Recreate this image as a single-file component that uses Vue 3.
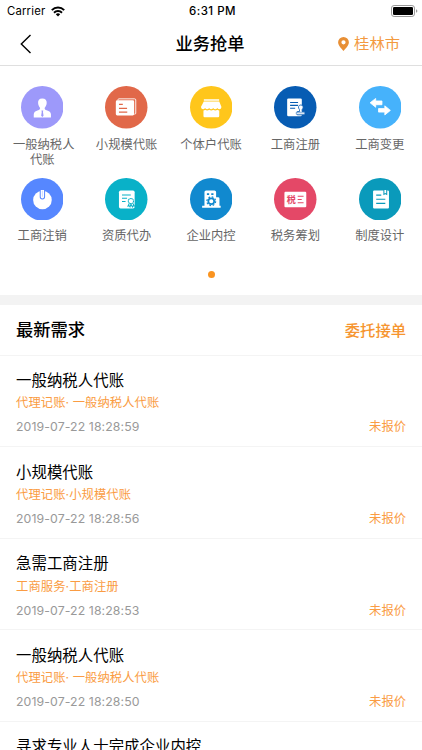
<script setup>
const services = [
  { icon: 'person', label: '一般纳税人代账', color: '#9d99fa' },
  { icon: 'ledger', label: '小规模代账', color: '#e16849' },
  { icon: 'shop', label: '个体户代账', color: '#ffc61b' },
  { icon: 'register', label: '工商注册', color: '#075cb3' },
  { icon: 'change', label: '工商变更', color: '#46b2fb' },
  { icon: 'power', label: '工商注销', color: '#5687ff' },
  { icon: 'certificate', label: '资质代办', color: '#09b1c8' },
  { icon: 'building', label: '企业内控', color: '#1189cf' },
  { icon: 'tax', label: '税务筹划', color: '#e44867' },
  { icon: 'book', label: '制度设计', color: '#0a9abb' },
]

const requests = [
  { title: '一般纳税人代账', category: '代理记账· 一般纳税人代账', time: '2019-07-22 18:28:59' },
  { title: '小规模代账', category: '代理记账·小规模代账', time: '2019-07-22 18:28:56' },
  { title: '急需工商注册', category: '工商服务·工商注册', time: '2019-07-22 18:28:53' },
  { title: '一般纳税人代账', category: '代理记账· 一般纳税人代账', time: '2019-07-22 18:28:50' },
  { title: '寻求专业人士完成企业内控', category: '', time: '' },
]
</script>

<template>
  <div class="screen">
    <div class="status">
      <div class="carrier">
        <span>Carrier</span>
        <svg class="wifi" viewBox="0 0 14 11" width="14" height="11">
          <g fill="none" stroke="#000" stroke-width="2">
            <path d="M.8 4.1a8.9 8.9 0 0 1 12.4 0" />
            <path d="M3 6.7a5.8 5.8 0 0 1 8 0" />
          </g>
          <path d="M4.8 8.2a3.2 3.2 0 0 1 4.4 0L7 10.5z" />
        </svg>
      </div>
      <div class="clock">6:31 PM</div>
      <svg class="battery" viewBox="0 0 27 12" width="27" height="12">
        <rect x=".5" y=".5" width="23" height="11" rx="2.6" fill="#fff" stroke="#999" />
        <rect x="2" y="2" width="20" height="8" rx="1.3" />
        <path d="M25 4.2q1.4.5 1.4 1.8T25 7.8z" fill="#999" />
      </svg>
    </div>

    <header class="nav">
      <svg class="back" viewBox="0 0 12 20" width="12" height="20">
        <path d="M10.5 1 1.3 10l9.2 9" fill="none" stroke="#000" stroke-width="1.4" />
      </svg>
      <h1>业务抢单</h1>
      <div class="city">
        <svg viewBox="0 0 11 14" width="11" height="14">
          <path fill="#e88f35" fill-rule="evenodd" d="M5.5 0A5.4 5.4 0 0 0 .1 5.3C.1 8.8 4 12.3 5.5 14 7 12.3 10.9 8.8 10.9 5.3A5.4 5.4 0 0 0 5.5 0zm0 3.2a2.1 2.1 0 1 1 0 4.2 2.1 2.1 0 0 1 0-4.2z" />
        </svg>
        <span>桂林市</span>
      </div>
    </header>

    <section class="services">
      <div v-for="s in services" :key="s.label" class="service">
        <svg class="icon" viewBox="0 0 42 42" width="42" height="42">
          <circle cx="21" cy="21" r="21" :fill="s.color" />
          <g v-if="s.icon === 'person'" fill="#fff">
            <path d="M21 12.3c-3 0-4.3 2-4.1 4.4.1 2.1 1 3.8 2 5-.1 1.3-.7 1.8-2 2.3-2.7.9-4.3 1.8-4.3 4.2v2.9h17v-2.9c0-2.4-1.6-3.3-4.3-4.2-1.3-.5-1.9-1-2-2.3 1-1.2 2-2.9 2.1-5 .2-2.4-1.3-4.4-4.4-4.4z" />
            <path d="M20.2 24.3h1.8l-.3 1.4.6 3.6-1.2 1.3-1.2-1.3.6-3.6z" :fill="s.color" />
          </g>
          <g v-else-if="s.icon === 'ledger'">
            <path d="M12.8 14.2v-.6q0-.9 1-.9h15.5q1.1 0 1.1 1.1v13q0 1-1 1h-.5" fill="none" stroke="#fff" stroke-width=".9" />
            <rect x="10.7" y="14.1" width="18.1" height="15" rx="1.4" fill="#fff" />
            <path d="M13.8 18.2h3.8M13.8 22.1h8M13.8 25.9h8.2" :stroke="s.color" stroke-width="1.2" />
          </g>
          <g v-else-if="s.icon === 'shop'" fill="#fff">
            <path d="M13.7 13h15.1v1.5H13.7zM13.6 15.4h15.3l2.2 5.4q-.3 2.2-2.1 2.2-1.2 0-2-1.3-.8 1.3-2.1 1.3-1.2 0-2-1.3-.8 1.3-2 1.3t-2-1.3q-.8 1.3-2 1.3t-2-1.3q-.8 1.3-2 1.3-1.7 0-2.1-2.2z" />
            <path d="M13.3 24.2q1 0 1.7-.7 2 1.4 4-.1 2 1.5 4 0 2 1.5 4 .1.8.7 1.9.7v5.4q0 1.2-1.1 1.2H14.4q-1.1 0-1.1-1.2z" />
          </g>
          <g v-else-if="s.icon === 'register'">
            <rect x="13" y="12.3" width="14.5" height="17.6" rx="1.3" fill="#fff" />
            <path d="M15.9 16.3h7.9M15.9 19.2h7.9M15.9 22h5" :stroke="s.color" stroke-width="1.1" />
            <path d="M26.6 18.7a2.4 2.4 0 0 1 1.3 4.3l-.2 2.2h2.2v3.3H23v-3.3h2.3l-.2-2.2a2.4 2.4 0 0 1 1.5-4.3z" fill="#fff" :stroke="s.color" stroke-width=".8" />
            <path d="M22 26h8.4v1.9H22z" fill="#fff" :stroke="s.color" stroke-width=".5" />
          </g>
          <g v-else-if="s.icon === 'change'" fill="#fff" stroke="#fff" stroke-width=".8" stroke-linejoin="round">
            <path d="m11 16.6 5.5-4.3v2.5h6.2v3.7h-6.2V21z" />
            <path d="m31 24.1-5.5-4.5v2.7h-6.2v3.5h6.2v2.8z" />
          </g>
          <g v-else-if="s.icon === 'power'">
            <circle cx="21.2" cy="21.7" r="9.2" fill="#fff" />
            <path d="M19 11.8v6.7a2.15 2.15 0 0 0 4.3 0v-6.7" fill="#fff" :stroke="s.color" stroke-width="1" />
            <path d="M21.15 12.5v6" :stroke="s.color" stroke-width=".3" />
          </g>
          <g v-else-if="s.icon === 'certificate'">
            <rect x="13.8" y="12.4" width="15.5" height="17.7" rx="1.6" fill="#fff" />
            <g fill="none" :stroke="s.color" stroke-width="1">
              <path d="M16.8 16.9h8.7M16.8 20.1h5M16.8 23.3h3.5" />
              <circle cx="25.6" cy="22.8" r="2.6" stroke-dasharray="1.5 .25" />
              <path d="m24 25.2-1.3 2.5 1.3-.2.7 1.1 1-2.6 1.4 2.6.7-1.1 1.3.2-1.5-2.5" />
            </g>
          </g>
          <g v-else-if="s.icon === 'building'">
            <path d="M14.3 13.9q0-1.6 1.6-1.6h8.2q1.7 0 1.7 1.6v5h2q1.3 0 1.3 1.3v7.3h1.2v2H12v-2h2.3z" fill="#fff" />
            <path d="M16.7 15.9h2.2M21 15.9h2.2" :stroke="s.color" stroke-width="1.7" />
            <circle cx="21" cy="23" r="4.3" :stroke="s.color" stroke-width="1.2" stroke-dasharray="1.7 1.677" fill="none" />
            <circle cx="21" cy="23" r="2.9" :stroke="s.color" stroke-width="1.7" fill="#fff" />
          </g>
          <g v-else-if="s.icon === 'tax'">
            <rect x="10.3" y="13.7" width="21.6" height="15.1" rx="1" fill="#fff" />
            <text x="12.5" y="24.6" class="tax-mark" :fill="s.color">税</text>
            <path d="M23.4 18h5.8M23.4 21.2h4M23.4 24.4h5.8" :stroke="s.color" stroke-width="1.1" />
          </g>
          <g v-else>
            <path d="M15 12.3h13.5q1.1 0 1.1 1.1v15.7q0 1.1-1.1 1.1H15q-1.1 0-1.1-1.1V13.4q0-1.1 1.1-1.1z" fill="#fff" />
            <path d="M24.6 11.8v4.5l1.4-.8 1.4.8v-4.5" fill="#fff" :stroke="s.color" stroke-width="1" />
            <path d="M17 17h5M17 21h9M17 25h9" :stroke="s.color" stroke-width="1.2" />
          </g>
        </svg>
        <div class="label" :class="{ wrapped: s.label.length > 5 }">{{ s.label }}</div>
      </div>
    </section>
    <div class="pager"><i></i></div>

    <div class="band"></div>

    <div class="section-head">
      <h2>最新需求</h2>
      <span>委托接单</span>
    </div>

    <article v-for="r in requests" :key="r.title + r.time" class="request">
      <h3>{{ r.title }}</h3>
      <p class="category">{{ r.category }}</p>
      <div v-if="r.time" class="meta">
        <time>{{ r.time }}</time>
        <span>未报价</span>
      </div>
    </article>
  </div>
</template>

<style>
body {
  margin: 0;
  background: #fff;
}
</style>

<style scoped>
.screen {
  width: 422px;
  height: 750px;
  overflow: hidden;
  background: #fff;
  color: #000;
  font-family: Inter, "Noto Sans CJK SC", sans-serif;
}
h1, h2, h3, p {
  margin: 0;
}
.status {
  display: grid;
  grid-template-columns: 1fr auto 1fr;
  align-items: center;
  height: 22px;
  padding: 0 4px 0 7px;
  font-size: 11.3px;
}
.carrier {
  display: flex;
  align-items: center;
  gap: 6px;
  letter-spacing: 0.2px;
}
.wifi {
  display: block;
}
.clock {
  font-weight: 500;
  font-size: 11.5px;
  letter-spacing: 0.5px;
}
.battery {
  justify-self: end;
}
.nav {
  display: grid;
  grid-template-columns: 1fr auto 1fr;
  align-items: center;
  height: 43px;
  padding: 0 22px 0 20px;
  border-bottom: 1px solid #dfdfdf;
}
h1, h2 {
  font-size: 17.3px;
  font-weight: 500;
  line-height: 24px;
}
h2 {
  padding-top: 1px;
}
.city {
  display: flex;
  justify-content: flex-end;
  align-items: center;
  gap: 5px;
  color: #f39a3f;
  font-size: 15.3px;
  line-height: 22px;
}
.services {
  display: grid;
  grid-template-columns: repeat(5, 1fr);
  grid-template-rows: 91.5px 82px;
  padding-top: 20px;
}
.service {
  display: flex;
  flex-direction: column;
  align-items: center;
}
.icon {
  display: block;
  width: 42.5px;
  height: 42.5px;
}
.tax-mark {
  font-size: 9px;
  font-weight: 700;
}
.label {
  width: 66px;
  margin-top: 9.4px;
  color: #666;
  font-size: 12.3px;
  line-height: 14.7px;
  text-align: center;
}
.label.wrapped {
  text-indent: 3px;
}
.pager {
  display: flex;
  justify-content: center;
  height: 24px;
  padding-top: 11px;
  box-sizing: border-box;
}
.pager i {
  width: 7px;
  height: 7px;
  border-radius: 50%;
  background: #fa9420;
}
.band {
  height: 10px;
  margin-top: 11px;
  background: #f3f3f3;
}
.section-head {
  display: flex;
  align-items: center;
  justify-content: space-between;
  height: 50px;
  padding: 0 16px;
  border-bottom: 1px solid #f4f4f4;
}
.section-head span {
  padding-bottom: 2px;
  color: #f6952f;
  font-size: 15.3px;
  font-weight: 500;
}
.request {
  height: 91.65px;
  box-sizing: border-box;
  padding: 14.4px 16px 0;
  border-bottom: 1px solid #f4f4f4;
}
h3 {
  font-size: 15.4px;
  font-weight: 400;
  letter-spacing: 0.05px;
  line-height: 22px;
}
.category {
  margin-top: 3.4px;
  color: #fa9c43;
  font-size: 12.3px;
  letter-spacing: 0.08px;
  line-height: 16px;
}
.meta {
  display: flex;
  justify-content: space-between;
  margin-top: 8px;
  color: #999;
  font-size: 12.3px;
  line-height: 16px;
}
.meta time {
  letter-spacing: 0.1px;
}
.meta span {
  color: #fa9c43;
}
</style>
